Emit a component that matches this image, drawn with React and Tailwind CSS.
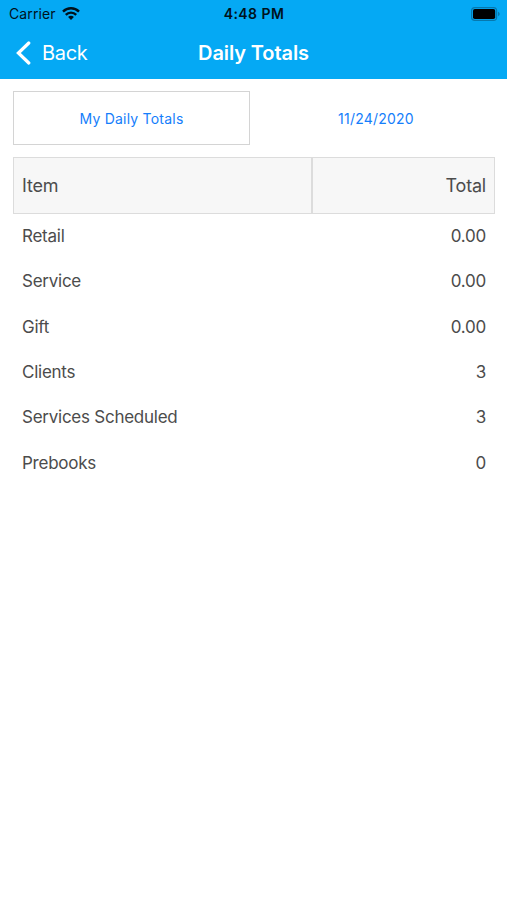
import React from 'react';

const rows = [
  { item: 'Retail', total: '0.00' },
  { item: 'Service', total: '0.00' },
  { item: 'Gift', total: '0.00' },
  { item: 'Clients', total: '3' },
  { item: 'Services Scheduled', total: '3' },
  { item: 'Prebooks', total: '0' },
];

function WifiIcon() {
  return (
    <svg width="18" height="13" viewBox="0 0 18 13" fill="none" stroke="#00121c" strokeWidth="2.4">
      <path d="M1 4.6a11.3 11.3 0 0 1 16 0" />
      <path d="M3.8 7.8a7.3 7.3 0 0 1 10.4 0" />
      <path d="M9 13 6.1 10a4 4 0 0 1 5.8 0z" fill="#00121c" stroke="none" />
    </svg>
  );
}

function BatteryIcon() {
  return (
    <svg width="30" height="14" viewBox="0 0 30 14">
      <rect x="0.6" y="0.6" width="25" height="12.8" rx="3.2" fill="none" stroke="#0678ae" strokeWidth="1.2" />
      <rect x="2" y="2" width="22.2" height="10" rx="1.8" fill="#000" />
      <path d="M27 4.8v4.4c1-.4 1.7-1.2 1.7-2.2S28 5.2 27 4.8z" fill="#0678ae" />
    </svg>
  );
}

function StatusBar() {
  return (
    <div className="grid h-[27px] grid-cols-3 items-center pl-[8px] pr-[7px] text-[#00121c]">
      <div className="flex items-center gap-[6px] pl-px text-[14px] tracking-[0.1px]">
        <span>Carrier</span>
        <WifiIcon />
      </div>
      <div className="text-center text-[14px] font-semibold tracking-[0.45px]">4:48 PM</div>
      <div className="-mr-px flex justify-end">
        <BatteryIcon />
      </div>
    </div>
  );
}

function NavBar() {
  return (
    <div className="grid h-[51px] grid-cols-3 items-center px-[16px] text-[20px] text-white">
      <button className="flex items-center gap-[11px] tracking-[-0.3px]">
        <svg width="15" height="24" viewBox="0 0 15 24" fill="none" stroke="currentColor" strokeWidth="3.2" strokeLinecap="round">
          <path d="M12.8 2 2.4 12l10.4 10" />
        </svg>
        <span>Back</span>
      </button>
      <h1 className="text-center font-semibold tracking-[-0.1px]">Daily Totals</h1>
    </div>
  );
}

export default function App() {
  return (
    <div className="min-h-screen bg-white font-['Inter',sans-serif] text-[#4c4c4c]">
      <header className="h-[79px] bg-[#05a9f4]">
        <StatusBar />
        <NavBar />
      </header>

      <main className="px-[13px] pt-[12px]">
        {/* Filter buttons */}
        <div className="flex h-[54px] text-[14px] tracking-[0.22px] text-[#157efb]">
          <button className="w-[237px] shrink-0 border border-[#d4d4d4]">My Daily Totals</button>
          <button className="w-[252px] shrink-0">11/24/2020</button>
        </div>

        {/* Totals table */}
        <div className="mt-[12px] flex h-[57px] w-[482px] items-center border border-[#dcdcdc] bg-[#f7f7f7] text-[18px] tracking-[-0.2px]">
          <div className="flex h-full w-[299px] items-center border-r-2 border-[#dcdcdc] pl-[8px]">Item</div>
          <div className="flex-1 pr-[8px] text-right">Total</div>
        </div>
        <ul className="w-[482px] pt-[0.2px] text-[17px] tracking-[-0.25px]">
          {rows.map((row) => (
            <li key={row.item} className="flex h-[45.3px] items-center justify-between px-[9px]">
              <span>{row.item}</span>
              <span>{row.total}</span>
            </li>
          ))}
        </ul>
      </main>
    </div>
  );
}
